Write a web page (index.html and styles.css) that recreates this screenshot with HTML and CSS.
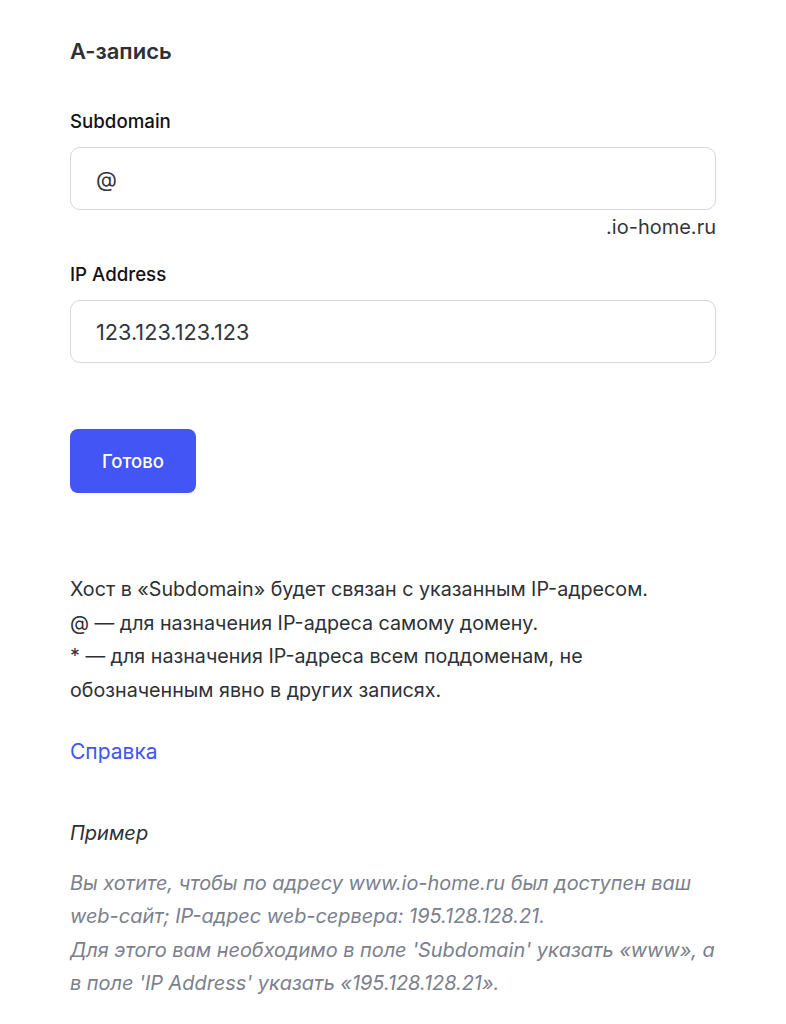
FILE: index.html
```html
<!DOCTYPE html>
<html lang="ru">
<head>
<meta charset="utf-8">
<link rel="stylesheet" href="styles.css">
</head>
<body>
<div class="page">
  <h1 class="title">А-запись</h1>
  <div class="field">
    <label class="label">Subdomain</label>
    <div class="input">@</div>
    <div class="suffix">.io-home.ru</div>
  </div>
  <div class="field field-ip">
    <label class="label">IP Address</label>
    <div class="input">123.123.123.123</div>
  </div>
  <button class="btn">Готово</button>
  <p class="info">Хост в «Subdomain» будет связан с указанным IP-адресом.<br>@ — для назначения IP-адреса самому домену.<br>* — для назначения IP-адреса всем поддоменам, не обозначенным явно в других записях.</p>
  <a class="help" href="#">Справка</a>
  <p class="example-title">Пример</p>
  <p class="example">Вы хотите, чтобы по адресу www.io-home.ru был доступен ваш web-сайт; IP-адрес web-сервера: 195.128.128.21.<br>Для этого вам необходимо в поле 'Subdomain' указать «www», а в поле 'IP Address' указать «195.128.128.21».</p>
</div>
</body>
</html>
```

FILE: styles.css
```css
html, body {
  margin: 0;
  padding: 0;
  background: #ffffff;
}
body {
  font-family: Inter, "Noto Sans", sans-serif;
  color: #2b2d33;
}
.page {
  width: 646px;
  padding: 37px 0 0 70px;
  display: flex;
  flex-direction: column;
  align-items: flex-start;
}
.title {
  margin: 0;
  font-size: 22px;
  line-height: 28px;
  font-weight: 600;
  color: #2e3036;
}
.field {
  width: 100%;
  display: flex;
  flex-direction: column;
  margin-top: 45px;
}
.field-ip {
  margin-top: 24px;
}
.label {
  font-size: 18.7px;
  line-height: 24px;
  font-weight: 500;
  color: #111216;
}
.input {
  margin-top: 13px;
  box-sizing: border-box;
  height: 63px;
  border: 1px solid #d6d6dd;
  border-radius: 10px;
  padding: 0 25px;
  display: flex;
  align-items: center;
  font-size: 21.7px;
  color: #34363c;
}
.suffix {
  margin-top: 5px;
  align-self: flex-end;
  font-size: 20px;
  line-height: 24px;
  color: #34363c;
}
.btn {
  margin-top: 66px;
  width: 126px;
  height: 64px;
  border: none;
  border-radius: 8px;
  background: #4355f5;
  color: #ffffff;
  font-family: Inter, "Noto Sans", sans-serif;
  font-size: 18.5px;
  font-weight: 500;
}
.info {
  margin: 80px 0 0;
  font-size: 19.7px;
  line-height: 33.5px;
  color: #2e3036;
}
.help {
  margin-top: 28px;
  font-size: 21px;
  line-height: 34px;
  color: #4355f5;
  text-decoration: none;
}
.example-title {
  margin: 48px 0 0;
  font-size: 20px;
  line-height: 33.5px;
  font-style: italic;
  color: #2e3036;
}
.example {
  margin: 16px 0 0;
  font-size: 19.9px;
  line-height: 33.5px;
  font-style: italic;
  color: #7b808c;
}
```
